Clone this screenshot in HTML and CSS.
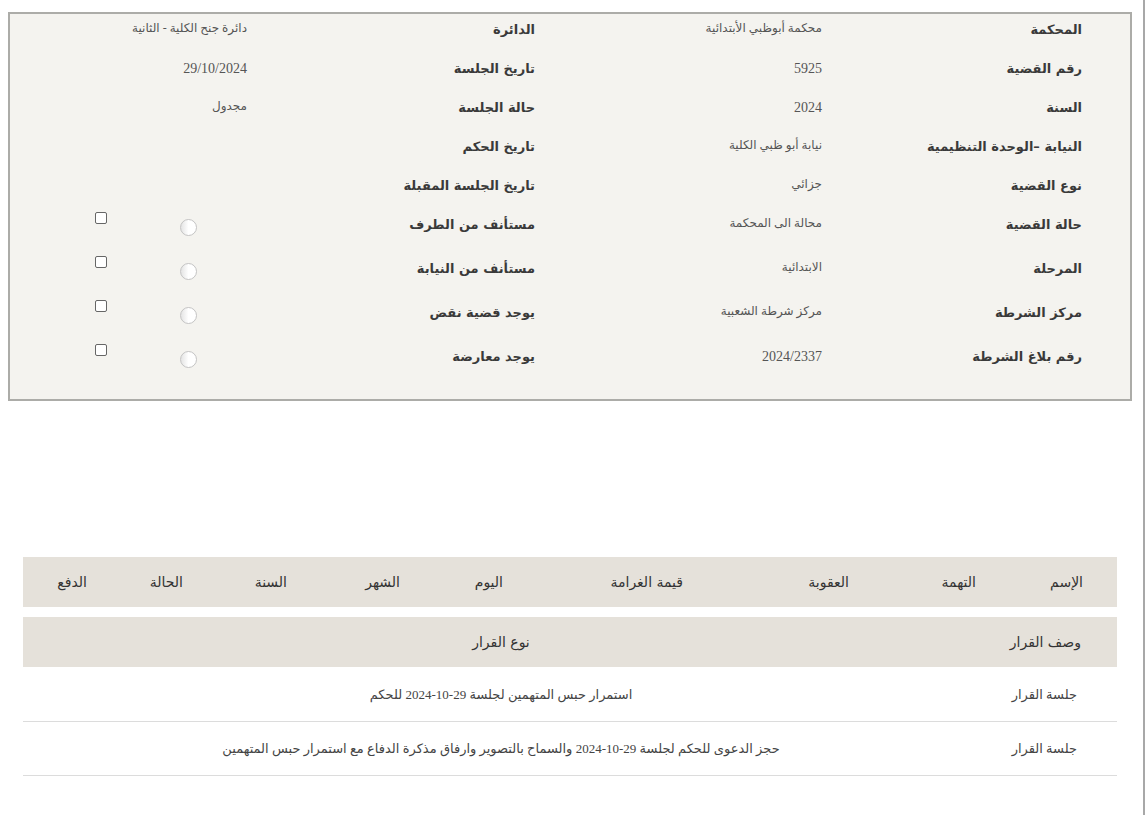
FILE: index.html
```html
<!DOCTYPE html>
<html lang="ar">
<head>
<meta charset="utf-8">
<title>Case details</title>
<link rel="stylesheet" href="styles.css">
</head>
<body>
<div class="page">
  <div class="panel" dir="rtl">
    <div class="info-grid">
      <div class="lbl">المحكمة</div><div class="val">محكمة أبوظبي الأبتدائية</div>
      <div class="lbl">الدائرة</div><div class="val">دائرة جنح الكلية - الثانية</div>

      <div class="lbl">رقم القضية</div><div class="val num">5925</div>
      <div class="lbl">تاريخ الجلسة</div><div class="val num">29/10/2024</div>

      <div class="lbl">السنة</div><div class="val num">2024</div>
      <div class="lbl">حالة الجلسة</div><div class="val">مجدول</div>

      <div class="lbl">النيابة –الوحدة التنظيمية</div><div class="val">نيابة أبو ظبي الكلية</div>
      <div class="lbl">تاريخ الحكم</div><div class="val"></div>

      <div class="lbl">نوع القضية</div><div class="val">جزائي</div>
      <div class="lbl">تاريخ الجلسة المقبلة</div><div class="val"></div>

      <div class="lbl">حالة القضية</div><div class="val">محالة الى المحكمة</div>
      <div class="lbl">مستأنف من الطرف</div><div class="ctrls"><span class="radio"></span><span class="check"></span></div>

      <div class="lbl">المرحلة</div><div class="val">الابتدائية</div>
      <div class="lbl">مستأنف من النيابة</div><div class="ctrls"><span class="radio"></span><span class="check"></span></div>

      <div class="lbl">مركز الشرطة</div><div class="val">مركز شرطة الشعبية</div>
      <div class="lbl">يوجد قضية نقض</div><div class="ctrls"><span class="radio"></span><span class="check"></span></div>

      <div class="lbl">رقم بلاغ الشرطة</div><div class="val num">2024/2337</div>
      <div class="lbl">يوجد معارضة</div><div class="ctrls"><span class="radio"></span><span class="check"></span></div>
    </div>
  </div>

  <div class="tables" dir="rtl">
    <div class="head head-cols">
      <div class="hc">الإسم</div>
      <div class="hc">التهمة</div>
      <div class="hc">العقوبة</div>
      <div class="hc">قيمة الغرامة</div>
      <div class="hc">اليوم</div>
      <div class="hc">الشهر</div>
      <div class="hc">السنة</div>
      <div class="hc">الحالة</div>
      <div class="hc">الدفع</div>
    </div>

    <div class="head dec-cols">
      <div class="hc first">وصف القرار</div>
      <div class="hc center">نوع القرار</div>
    </div>

    <div class="drow dec-cols">
      <div class="dc first">جلسة القرار</div>
      <div class="dc center">استمرار حبس المتهمين لجلسة 29-10-2024 للحكم</div>
    </div>
    <div class="drow dec-cols">
      <div class="dc first">جلسة القرار</div>
      <div class="dc center">حجز الدعوى للحكم لجلسة 29-10-2024 والسماح بالتصوير وارفاق مذكرة الدفاع مع استمرار حبس المتهمين</div>
    </div>
  </div>
</div>
</body>
</html>
```

FILE: styles.css
```css
html, body {
  margin: 0;
  padding: 0;
  background: #ffffff;
}

.page {
  box-sizing: border-box;
  width: 1145px;
  min-height: 815px;
  border-right: 2px solid #a8a8a8;
  padding: 12px 11px 0 8px;
  font-family: "DejaVu Sans", sans-serif;
  color: #333;
}

.panel {
  border: 2px solid #acaca8;
  background: #f4f3ef;
  padding: 6px 48px 8px 0;
}

.info-grid {
  display: grid;
  grid-template-columns: 260px 287px 288px 1fr;
  grid-template-rows: repeat(5, 39px) repeat(4, 44px);
  align-items: start;
}

.lbl {
  font-family: "DejaVu Sans", sans-serif;
  font-weight: bold;
  font-size: 13px;
  line-height: 20px;
  color: #3a3a3a;
}

.val {
  font-family: "Liberation Serif", "DejaVu Sans", serif;
  font-size: 12px;
  line-height: 16px;
  color: #555;
}

.val.num {
  font-size: 14px;
  line-height: 20px;
  margin-top: 0;
}

.ctrls {
  display: flex;
  align-items: flex-start;
  padding-right: 50px;
}

.radio {
  box-sizing: border-box;
  width: 17px;
  height: 17px;
  border-radius: 50%;
  border: 1px solid #c4c4c4;
  background: linear-gradient(to left, #ffffff 0%, #ffffff 50%, #e4e4e4 100%);
  margin-top: 4px;
}

.check {
  box-sizing: border-box;
  width: 12px;
  height: 12px;
  border: 1px solid #666;
  border-radius: 2px;
  background: #fff;
  margin-right: 73px;
  margin-top: -3px;
}

.tables {
  margin: 156px 15px 0 15px;
}

.head {
  background: #e5e1da;
  height: 50px;
  align-items: center;
  font-size: 14px;
  color: #333;
}

.head + .head {
  margin-top: 10px;
}

.head-cols {
  display: grid;
  grid-template-columns: 107px 127px 166px 180px 103px 113px 104px 96px 98px;
}

.hc {
  padding-right: 34px;
}

.dec-cols {
  display: grid;
  grid-template-columns: 138px 1fr;
  align-items: center;
}

.dec-cols .first {
  padding-right: 36px;
}

.hc.center {
  padding-right: 0;
}

.center {
  text-align: center;
}

.drow {
  height: 53px;
  border-bottom: 1px solid #dcdcdc;
  font-family: "Liberation Serif", "DejaVu Sans", serif;
  font-size: 13px;
  color: #444;
}

.head + .drow {
  margin-top: 1px;
}

.drow .first {
  padding-right: 40px;
}
```
